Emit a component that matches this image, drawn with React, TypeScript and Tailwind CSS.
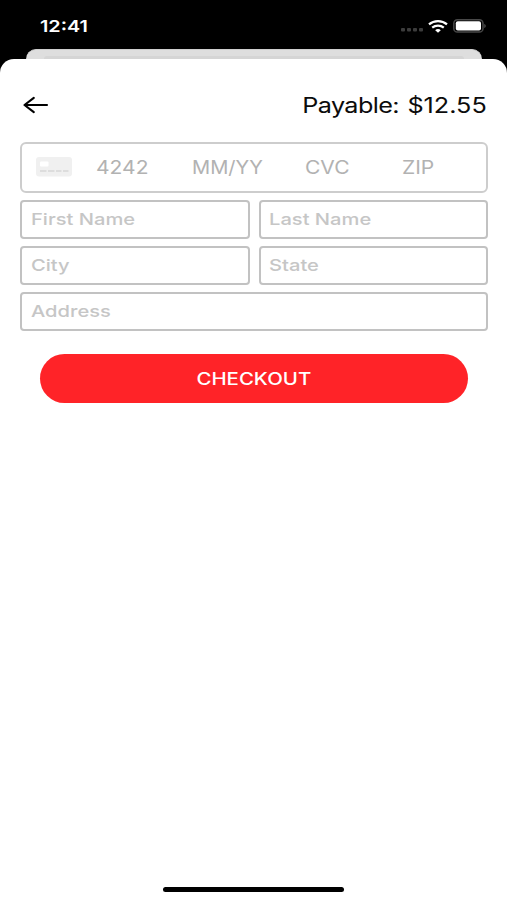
import type { ReactNode } from "react";

export default function App() {
  return (
    <div className="flex h-[900px] w-[507px] flex-col overflow-hidden bg-black font-['Inter',sans-serif]">
      <StatusBar />
      {/* Edge of the screen underneath the sheet */}
      <div className="mr-[25px] ml-[26px] flex h-[10px] shrink-0 flex-col justify-end rounded-t-[10px] border-t border-[#cfcfcf] bg-[#dedede] px-[18px]">
        <div className="h-[3px] rounded-t-[3px] bg-[#d5d5d5]" />
      </div>
      <main className="flex flex-1 flex-col rounded-t-[14px] bg-white">
        <header className="flex h-[91px] items-center justify-between pr-[20.5px] pl-[23px]">
          <BackArrow />
          <Label className="origin-right scale-x-[1.2] pt-px text-[21px] text-[#0c0c0c]">
            <span className="mr-[1.6px] tracking-[-0.5px]">Payable: </span>
            <span>$12.55</span>
          </Label>
        </header>
        <CheckoutForm />
        <div className="mx-auto mt-auto mb-[8px] h-[5px] w-[181px] rounded-full bg-black" />
      </main>
    </div>
  );
}

function Label({
  className,
  children,
}: {
  className: string;
  children: ReactNode;
}) {
  return (
    <span className={`inline-block whitespace-nowrap leading-none ${className}`}>
      {children}
    </span>
  );
}

function StatusBar() {
  return (
    <div className="flex h-[49px] shrink-0 items-center justify-between pt-[3px] pr-[20px] pl-[40px] text-white">
      <Label className="origin-left scale-x-[1.2] text-[16.5px] font-semibold">
        12:41
      </Label>
      <div className="flex items-center">
        <svg width="24" height="4" className="mt-[7px] mr-[4px]" fill="#3c3c3c">
          <rect x="0" y="0" width="4" height="3.5" rx="1" />
          <rect x="6" y="0" width="4" height="3.5" rx="1" />
          <rect x="12" y="0" width="4" height="3.5" rx="1" />
          <rect x="18" y="0" width="4" height="3.5" rx="1" />
        </svg>
        <svg
          width="20"
          height="13"
          viewBox="0 0 20 13"
          fill="none"
          stroke="#fff"
          strokeWidth="2.2"
          className="mr-[5px] -translate-x-px"
        >
          <path d="M1 4.4C6 0 14 0 19 4.4" />
          <path d="M4.2 7.7c3.4-2.9 8.2-2.9 11.6 0" />
          <path d="M7.2 10.2c1.6-1.5 4-1.5 5.6 0L10 12.7z" fill="#fff" stroke="none" />
        </svg>
        <svg width="33" height="14" viewBox="0 0 33 14" className="-translate-x-px">
          <rect x="0.8" y="0.8" width="29.2" height="12.2" rx="3.6" fill="none" stroke="#484848" strokeWidth="1.5" />
          <rect x="2.8" y="2.2" width="25.2" height="9.4" rx="2" fill="#fff" />
          <path d="M31.2 5v4c1-.3 1.6-1.1 1.6-2s-.6-1.7-1.6-2z" fill="#484848" />
        </svg>
      </div>
    </div>
  );
}

function BackArrow() {
  return (
    <svg
      width="26"
      height="18"
      viewBox="0 0 26 18"
      fill="none"
      stroke="#000"
      strokeWidth="2.1"
      strokeLinecap="round"
      strokeLinejoin="round"
    >
      <path d="M24 9H1.5M10.8 1.8L1.5 9l9.3 7.2" />
    </svg>
  );
}

function CardIcon() {
  return (
    <svg width="36" height="20" viewBox="0 0 36 20">
      <rect width="36" height="19.5" rx="3" fill="#f0f0f0" />
      <rect x="4" y="4.5" width="8.5" height="5" rx="1" fill="#fff" />
      <path
        d="M4 14h6.5M12 14h6.5M20 14h5.5M27 14h5.5"
        stroke="#d6d6d6"
        strokeWidth="1.4"
      />
    </svg>
  );
}

function CardField() {
  return (
    <div className="col-span-2 flex h-[51px] items-center rounded-[6px] border-2 border-[#cdcdcd] pl-[14px] text-[18.3px] text-[#b2b2b2]">
      <CardIcon />
      <div className="ml-[24px] flex w-[95.5px]">
        <Label className="origin-left scale-x-[1.15]">4242</Label>
      </div>
      <div className="flex w-[113.5px]">
        <Label className="origin-left scale-x-[1.1]">MM/YY</Label>
      </div>
      <div className="flex w-[97px]">
        <Label className="origin-left scale-x-[1.15]">CVC</Label>
      </div>
      <Label className="origin-left scale-x-[1.15]">ZIP</Label>
    </div>
  );
}

function Field({ label, wide }: { label: string; wide?: boolean }) {
  return (
    <div
      className={`flex h-[39px] items-center rounded-[4px] border-2 border-[#c2c2c2] pl-[8.5px] ${wide ? "col-span-2" : ""}`}
    >
      <Label className="origin-left scale-x-[1.22] text-[16.5px] font-medium text-[#c6c6c6]">
        {label}
      </Label>
    </div>
  );
}

function CheckoutForm() {
  return (
    <form>
      <div className="mr-[19px] ml-[20px] mt-[-8.5px] grid grid-cols-2 gap-x-[9px] gap-y-[7.2px]">
        <CardField />
        <Field label="First Name" />
        <Field label="Last Name" />
        <Field label="City" />
        <Field label="State" />
        <Field label="Address" wide />
      </div>
      <button
        type="button"
        className="mx-[39.5px] mt-[23px] flex h-[49px] w-[428px] items-center justify-center rounded-full bg-[#ff2328] pt-[2px]"
      >
        <Label className="scale-x-[1.2] text-[17px] font-medium text-white">
          CHECKOUT
        </Label>
      </button>
    </form>
  );
}
